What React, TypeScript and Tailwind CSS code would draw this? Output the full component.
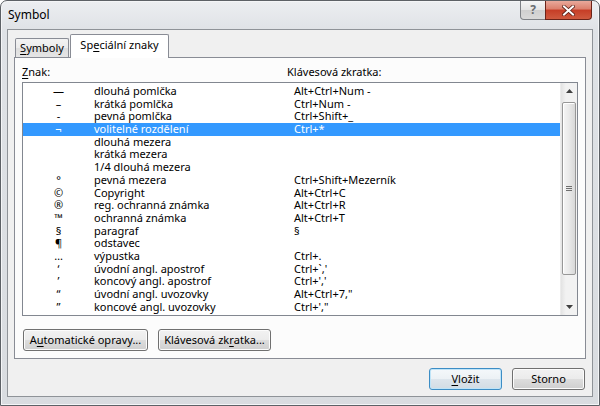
import React from 'react';

type Row = { sym: string; name: string; keys: string };

const ROWS: Row[] = [
  { sym: '—', name: 'dlouhá pomlčka', keys: 'Alt+Ctrl+Num -' },
  { sym: '–', name: 'krátká pomlčka', keys: 'Ctrl+Num -' },
  { sym: '-', name: 'pevná pomlčka', keys: 'Ctrl+Shift+_' },
  { sym: '¬', name: 'volitelné rozdělení', keys: 'Ctrl+*' },
  { sym: '', name: 'dlouhá mezera', keys: '' },
  { sym: '', name: 'krátká mezera', keys: '' },
  { sym: '', name: '1/4 dlouhá mezera', keys: '' },
  { sym: '°', name: 'pevná mezera', keys: 'Ctrl+Shift+Mezerník' },
  { sym: '©', name: 'Copyright', keys: 'Alt+Ctrl+C' },
  { sym: '®', name: 'reg. ochranná známka', keys: 'Alt+Ctrl+R' },
  { sym: '™', name: 'ochranná známka', keys: 'Alt+Ctrl+T' },
  { sym: '§', name: 'paragraf', keys: '§' },
  { sym: '¶', name: 'odstavec', keys: '' },
  { sym: '…', name: 'výpustka', keys: 'Ctrl+.' },
  { sym: '‘', name: 'úvodní angl. apostrof', keys: "Ctrl+`,'" },
  { sym: '’', name: 'koncový angl. apostrof', keys: "Ctrl+','" },
  { sym: '“', name: 'úvodní angl. uvozovky', keys: 'Alt+Ctrl+7,"' },
  { sym: '”', name: 'koncové angl. uvozovky', keys: "Ctrl+',\"" },
];

const SELECTED = 3;

const U: React.FC<{ children: React.ReactNode }> = ({ children }) => (
  <span className="underline underline-offset-[2px] decoration-1">{children}</span>
);

const Btn: React.FC<{ children: React.ReactNode; className?: string; isDefault?: boolean }> = ({ children, className = '', isDefault }) => (
  <div
    className={`h-[22px] flex items-center justify-center rounded-[3px] border text-black ${
      isDefault
        ? 'border-[#3c8dc5] shadow-[inset_0_0_0_1px_#bfe4f8] bg-[linear-gradient(#f4f8fb_0%,#ecf1f5_50%,#dde5ec_51%,#d2dce4_100%)]'
        : 'border-[#707070] shadow-[inset_0_0_0_1px_#fcfcfc] bg-[linear-gradient(#f2f2f2_0%,#ebebeb_50%,#dddddd_51%,#cfcfcf_100%)]'
    } ${className}`}
  >
    {children}
  </div>
);

const ScrollBar: React.FC = () => (
  <div className="w-[17px] h-full flex flex-col bg-[linear-gradient(90deg,#e3e3e3,#f2f2f2_30%,#f2f2f2)] border-l border-[#ececec]">
    <div className="h-[17px] flex items-center justify-center">
      <svg width="7" height="4" viewBox="0 0 7 4"><path d="M0 4 L3.5 0 L7 4 Z" fill="#404040" /></svg>
    </div>
    <div className="flex-1 px-px pt-[2px] pb-[24px] flex flex-col">
      <div className="h-[173px] rounded-[2px] border border-[#979797] bg-[linear-gradient(90deg,#f5f5f5,#e9e9e9_50%,#d8d8d8)] shadow-[inset_1px_1px_0_#ffffff] flex items-center justify-center">
        <div className="flex flex-col gap-[1px]">
          <div className="w-[6px] h-px bg-[#6f6f6f]" />
          <div className="w-[6px] h-px bg-[#6f6f6f]" />
          <div className="w-[6px] h-px bg-[#6f6f6f]" />
        </div>
      </div>
    </div>
    <div className="h-[17px] flex items-center justify-center">
      <svg width="7" height="4" viewBox="0 0 7 4"><path d="M0 0 L7 0 L3.5 4 Z" fill="#404040" /></svg>
    </div>
  </div>
);

const App: React.FC = () => {
  return (
    <div className="w-[600px] h-[406px] bg-white font-['Segoe_UI','Noto_Sans',sans-serif] text-[11px] text-black select-none">
      <div className="relative w-full h-full rounded-t-[7px] border border-[#5d6166] bg-[linear-gradient(#eceef1,#dfe2e6_30px,#d9dce0)] shadow-[inset_0_0_0_1px_#f4f5f7] flex flex-col px-[6px] pb-[8px]">
        {/* title bar */}
        <div className="h-[28px] flex items-center pl-[1px] pb-[1px] text-[12px] text-black">Symbol</div>

        <div className="absolute top-0 right-[7px] flex">
          <div className="w-[26px] h-[19px] rounded-bl-[4px] border border-t-0 border-[#7d8085] bg-[linear-gradient(#f6f6f6,#e4e4e4_50%,#cfcfcf_51%,#d9d9d9)] flex items-center justify-center text-[12px] font-bold text-[#6a6d71] leading-none">?</div>
          <div className="w-[47px] h-[19px] -ml-px rounded-br-[4px] border border-t-0 border-[#6b2318] bg-[linear-gradient(#e9a99b,#db7f6c_45%,#c63d26_50%,#cf5a3f_100%)] flex items-center justify-center">
            <svg width="13" height="11" viewBox="0 0 13 11">
              <path d="M2 1.5 L11 9.5 M11 1.5 L2 9.5" stroke="#5a1f16" strokeWidth="3.6" strokeLinecap="square" />
              <path d="M2 1.5 L11 9.5 M11 1.5 L2 9.5" stroke="#ffffff" strokeWidth="2" strokeLinecap="square" />
            </svg>
          </div>
        </div>

        {/* client area */}
        <div className="flex-1 border border-[#8f9398] bg-[#f0f0f0] flex flex-col">
          {/* tabs */}
          <div className="relative z-10 h-[24px] mt-[4px] px-[7px] flex items-end">
            <div className="w-[54px] h-[19px] mb-px rounded-t-[2px] border border-b-0 border-[#898c95] bg-[linear-gradient(#f3f3f3,#ebebeb_50%,#dedede_51%,#e5e5e5)] flex items-center justify-center">
              <span><U>S</U>ymboly</span>
            </div>
            <div className="w-[99px] h-[24px] ml-px rounded-t-[2px] border border-b-0 border-[#898c95] bg-white flex items-center justify-center pb-[3px]">
              <span>Sp<U>e</U>ciální znaky</span>
            </div>
          </div>

          {/* tab page */}
          <div className="h-[302px] -mt-px mx-[6px] border border-[#898c95] bg-[#fcfcfc] flex flex-col">
            <div className="h-[24px] pt-[7px] pl-[7px] flex leading-[14px]">
              <span className="w-[265px]"><U>Z</U>nak:</span>
              <span>Klávesová zkratka:</span>
            </div>

            <div className="h-[234px] mx-[7px] border border-[#828790] bg-white flex">
              <div className="flex-1 pt-[2px]">
                {ROWS.map((r, i) => (
                  <div
                    key={i}
                    className={`h-[12.7px] leading-[12.7px] flex whitespace-nowrap ${i === SELECTED ? 'bg-[#3399ff] text-white' : ''}`}
                  >
                    <span className="w-[71px] text-center">{r.sym}</span>
                    <span className="w-[200px]">{r.name}</span>
                    <span>{r.keys}</span>
                  </div>
                ))}
              </div>
              <ScrollBar />
            </div>

            <div className="mt-[13px] pl-[8px] flex gap-[10px]">
              <Btn className="w-[125px]">A<U>u</U>tomatické opravy...</Btn>
              <Btn className="w-[113px]">Klávesová zk<U>r</U>atka...</Btn>
            </div>
          </div>

          {/* dialog buttons */}
          <div className="mt-[9px] pr-[7px] flex justify-end gap-[10px]">
            <Btn className="w-[73px]" isDefault><span><U>V</U>ložit</span></Btn>
            <Btn className="w-[73px]">Storno</Btn>
          </div>
        </div>
      </div>
    </div>
  );
};

export default App;
